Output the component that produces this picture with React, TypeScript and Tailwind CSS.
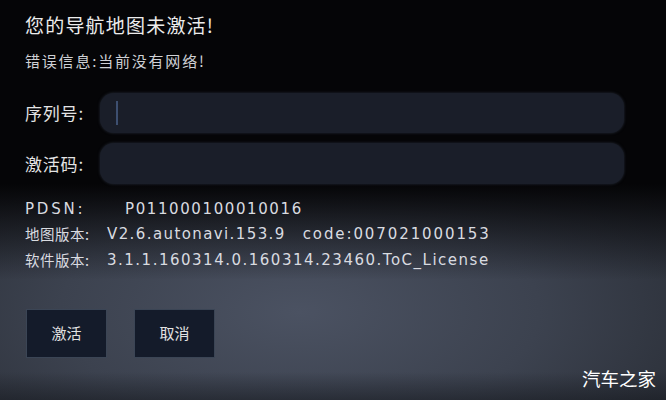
import React from "react";

const cjk = "font-['Noto_Sans_CJK_SC',sans-serif]";
const mixed = "font-['DejaVu_Sans','Noto_Sans_CJK_SC',sans-serif]";

const InfoRow: React.FC<{ label: string; children: React.ReactNode }> = ({ label, children }) => (
  <div className="flex items-center h-[25.5px] text-[15px] text-[#d9dbe0]">
    <span className={`w-[82px] shrink-0 text-[14.5px] tracking-[0.5px] ${cjk}`}>{label}</span>
    {children}
  </div>
);

const App: React.FC = () => {
  return (
    <div className="relative w-[666px] h-[400px] overflow-hidden bg-[#15171c] bg-[linear-gradient(to_top,rgba(22,25,31,0.55)_0%,rgba(22,25,31,0)_7%),linear-gradient(to_bottom,#050507_0%,#050507_46%,rgba(5,5,7,0.6)_55%,rgba(5,5,7,0)_70%),radial-gradient(ellipse_90%_70%_at_45%_78%,#4b5262_0%,#3c424f_40%,#272b33_80%,#1c1f25_100%)]">
      <div className="flex flex-col pl-[25px] pt-[13px]">
        <h1 className={`h-[24px] text-[19px] leading-[24px] tracking-[1.2px] text-[#ececec] ${cjk}`}>您的导航地图未激活!</h1>
        <p className={`mt-[14px] h-[20px] text-[15px] leading-[20px] tracking-[1.8px] text-[#cfd1d5] ${cjk}`}>错误信息:当前没有网络!</p>

        <div className="mt-[22px] flex flex-col gap-[10px]">
          <div className="flex items-center">
            <label className={`w-[75px] text-[17px] tracking-[0.8px] text-[#e4e4e4] ${cjk}`}>序列号:</label>
            <div className="relative h-[40px] w-[524px] rounded-[14px] bg-[#1a1e29] shadow-[0_0_3px_rgba(60,70,90,0.6)]">
              <span className="absolute left-[16px] top-[8px] h-[24px] w-[2px] bg-[#3d4f70]" />
            </div>
          </div>
          <div className="flex items-center">
            <label className={`w-[75px] text-[17px] tracking-[0.8px] text-[#e4e4e4] ${cjk}`}>激活码:</label>
            <div className="h-[41px] w-[524px] rounded-[14px] bg-[#1a1e29] shadow-[0_0_3px_rgba(60,70,90,0.6)]" />
          </div>
        </div>

        <div className={`mt-[12px] flex flex-col ${mixed}`}>
          <div className="flex items-center h-[25.5px] text-[15px] text-[#d9dbe0]">
            <span className="w-[100px] shrink-0 tracking-[2.8px]">PDSN:</span>
            <span className="tracking-[1.6px]">P011000100010016</span>
          </div>
          <InfoRow label="地图版本:">
            <span className="tracking-[1.4px]">V2.6.autonavi.153.9</span>
            <span className="ml-[17px] tracking-[1.9px]">code:007021000153</span>
          </InfoRow>
          <InfoRow label="软件版本:">
            <span className="tracking-[1.5px]">3.1.1.160314.0.160314.23460.ToC_License</span>
          </InfoRow>
        </div>

        <div className="mt-[36px] flex gap-[27px] pl-[1px]">
          <button className={`h-[49px] w-[81px] border border-[#3b4555] bg-[#141b2a] text-[15px] text-[#e2e2e2] ${cjk}`}>激活</button>
          <button className={`h-[49px] w-[81px] border border-[#3b4555] bg-[#141b2a] text-[15px] text-[#e2e2e2] ${cjk}`}>取消</button>
        </div>
      </div>

      <span className={`absolute right-[10px] bottom-[7px] text-[18.5px] text-white ${cjk}`}>汽车之家</span>
    </div>
  );
};

export default App;
